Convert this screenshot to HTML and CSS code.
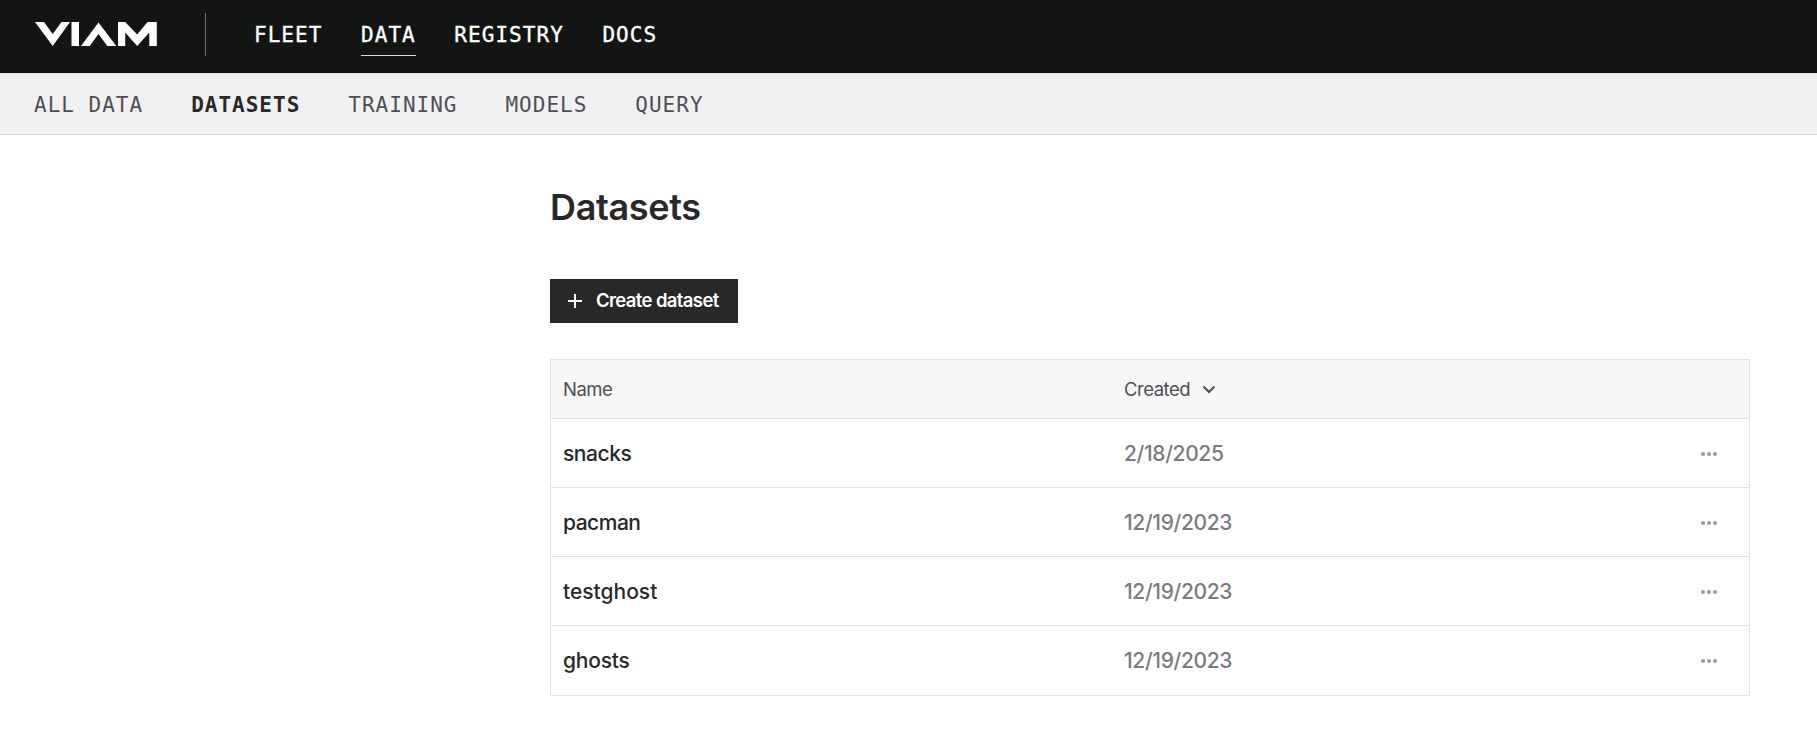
FILE: index.html
```html
<!DOCTYPE html>
<html lang="en">
<head>
<meta charset="utf-8">
<title>Datasets</title>
<link rel="stylesheet" href="styles.css">
</head>
<body>
<header class="topbar">
  <svg class="logo" width="123" height="24" viewBox="0 0 123 24" fill="#fff" aria-label="Viam">
    <path d="M0 0H9L17.700 12L26.500 0H35L17.700 24Z"/>
    <path d="M36.500 0H44V24H36.500Z"/>
    <path d="M46 24L63.500 0.400L81.300 24H72.300L63.500 12L54.700 24Z"/>
    <path d="M83 24V0H90.200L102.200 12.500L112.500 0H121.800V24H114.300V10.500L102.200 24L90.200 10.500V24Z"/>
  </svg>
  <span class="divider"></span>
  <nav class="main-nav">
    <a>FLEET</a>
    <a class="current">DATA</a>
    <a>REGISTRY</a>
    <a>DOCS</a>
  </nav>
</header>
<nav class="sub-nav">
  <a>ALL DATA</a>
  <a class="active">DATASETS</a>
  <a>TRAINING</a>
  <a>MODELS</a>
  <a>QUERY</a>
</nav>
<main class="content">
  <h1 class="title">Datasets</h1>
  <button class="create">
    <svg width="14" height="14" viewBox="0 0 14 14" fill="#fff"><path d="M6 0H8V6H14V8H8V14H6V8H0V6H6Z"/></svg>
    <span>Create dataset</span>
  </button>
  <section class="table">
    <div class="row head">
      <span class="h-name">Name</span>
      <span class="h-created"><span>Created</span>
        <svg width="14" height="10" viewBox="0 0 14 10" fill="none" stroke="#4e4f52" stroke-width="2"><path d="M1.500 2.500L7 8L12.500 2.500"/></svg>
      </span>
    </div>
    <div class="row"><span class="name snacks">snacks</span><span class="date">2/18/2025</span><svg class="dots" width="18" height="6" viewBox="0 0 18 6"><circle cx="3" cy="3" r="2.100"/><circle cx="9" cy="3" r="2.100"/><circle cx="15" cy="3" r="2.100"/></svg></div>
    <div class="row"><span class="name pacman">pacman</span><span class="date">12/19/2023</span><svg class="dots" width="18" height="6" viewBox="0 0 18 6"><circle cx="3" cy="3" r="2.100"/><circle cx="9" cy="3" r="2.100"/><circle cx="15" cy="3" r="2.100"/></svg></div>
    <div class="row"><span class="name testghost">testghost</span><span class="date">12/19/2023</span><svg class="dots" width="18" height="6" viewBox="0 0 18 6"><circle cx="3" cy="3" r="2.100"/><circle cx="9" cy="3" r="2.100"/><circle cx="15" cy="3" r="2.100"/></svg></div>
    <div class="row last"><span class="name ghosts">ghosts</span><span class="date">12/19/2023</span><svg class="dots" width="18" height="6" viewBox="0 0 18 6"><circle cx="3" cy="3" r="2.100"/><circle cx="9" cy="3" r="2.100"/><circle cx="15" cy="3" r="2.100"/></svg></div>
  </section>
</main>
</body>
</html>
```
FILE: styles.css
```css
* { box-sizing: border-box; }
body {
  margin: 0;
  background: #fff;
  color: #282829;
  font-family: Inter, "Liberation Sans", sans-serif;
}
.topbar {
  height: 73px;
  padding: 13px 0 0 35px;
  display: flex;
  align-items: flex-start;
  background: #131514;
}
.logo { margin-top: 9px; flex: none; }
.divider {
  width: 1px;
  height: 43px;
  margin-left: 47px;
  background: #717273;
}
.main-nav, .sub-nav {
  display: flex;
  font-family: "DejaVu Sans Mono", monospace;
  font-size: 21px;
  letter-spacing: 1px;
  line-height: 24px;
  white-space: pre;
}
.main-nav {
  margin-left: 48px;
  gap: 38.600px;
  color: #fff;
  letter-spacing: 1.040px;
  -webkit-text-stroke: 0.350px #fff;
}
.main-nav a {
  height: 43px;
  padding-top: 10px;
  border-bottom: 1px solid transparent;
}
.main-nav .current { border-color: #d8d8d8; }
.sub-nav {
  height: 62px;
  padding: 19px 0 0 34px;
  gap: 48px;
  color: #4e4f52;
  background: #f1f1f4;
  border-top: 1px solid #e4e4e6;
  border-bottom: 1px solid #d7d7d9;
}
.sub-nav .active { color: #282829; font-weight: 700; }
.content { width: 1200px; margin-left: 550px; padding-top: 50px; }
.title {
  margin: 0;
  height: 44px;
  font-size: 36px;
  line-height: 44px;
  font-weight: 600;
  letter-spacing: -0.350px;
}
.create {
  display: flex;
  align-items: center;
  width: 188px;
  height: 44px;
  margin-top: 50px;
  padding: 0 0 0 18px;
  gap: 14px;
  border: 0;
  background: #282829;
  color: #fff;
  font-family: inherit;
  font-size: 18.500px;
  font-weight: 600;
  letter-spacing: -0.620px;
  white-space: nowrap;
}
.create span { margin-top: -2px; }
.table {
  margin-top: 36px;
  border: 1px solid #e4e4e6;
}
.row {
  height: 69px;
  display: grid;
  grid-template-columns: 561px 576px auto;
  align-items: center;
  padding-left: 12px;
  border-bottom: 1px solid #dfe2e7;
  font-size: 21px;
}
.row.last { padding-bottom: 1px; border-bottom: 0; }
.head {
  height: 59px;
  background: #f7f7f8;
  color: #4e4f52;
  font-size: 18.500px;
  letter-spacing: -0.500px;
  border-bottom-color: #dbe1ea;
}
.h-created { display: flex; align-items: center; gap: 12px; }
.name { font-weight: 500; }
.snacks { letter-spacing: -0.450px; }
.pacman { letter-spacing: -0.500px; }
.ghosts { letter-spacing: -0.200px; }
.date { color: #7a7b80; font-weight: 500; letter-spacing: -0.360px; }
.dots { fill: #9c9ca4; margin-top: 2px; }
```
